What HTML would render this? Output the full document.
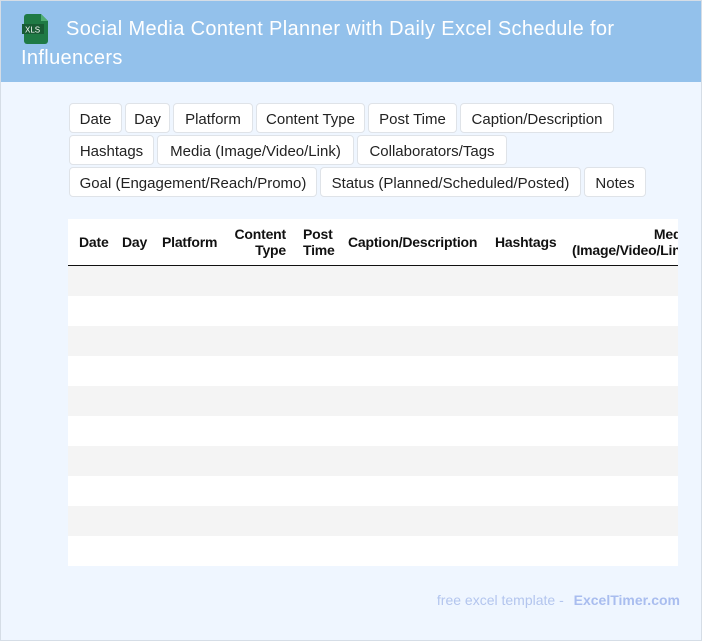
<!DOCTYPE html>
<html><head><meta charset="utf-8"><style>
*{margin:0;padding:0;box-sizing:border-box}
body{width:702px;height:641px;overflow:hidden;background:#eff6ff;font-family:"Liberation Sans",Arial,sans-serif;position:relative}
.frame{position:absolute;left:0;top:0;width:702px;height:641px;border:1px solid #d5dde6;}
.hdr{position:absolute;left:1px;top:1px;width:700px;height:81px;background:#93c1eb}
.title{position:absolute;left:21px;top:15px;width:660px;color:#fff;font-size:20px;letter-spacing:0.35px;line-height:29px;text-indent:45px}
.icon{position:absolute;left:22px;top:14px}
.tag{position:absolute;height:30px;background:#fff;border:1px solid #dfe3e8;border-radius:4px;font-size:15px;color:#222;line-height:29px;padding-top:1px;text-align:center}
.tbl{position:absolute;left:68px;top:219px;width:610px;height:347px;background:#fff;overflow:hidden}
.th{position:absolute;top:0;height:46px;font-weight:bold;font-size:14px;color:#111;display:flex;align-items:center;line-height:16px;white-space:nowrap;letter-spacing:-0.2px}
.line{position:absolute;left:0;top:46px;width:610px;height:2px;background:#111}
.row{position:absolute;left:0;width:610px;height:30px}
.foot{position:absolute;right:22px;top:592px;font-size:14px;color:#b3c5ee}
.foot b{color:#a9bdef;margin-left:6px}
</style></head><body>
<div class="frame"></div>
<div class="hdr"></div>
<svg class="icon" width="28" height="30" viewBox="0 0 28 30"><path d="M5 0h14l7 7v20a3 3 0 0 1-3 3H5a3 3 0 0 1-3-3V3a3 3 0 0 1 3-3z" fill="#1f7a45"/><path d="M19 0v7h7z" fill="#4fae72"/><rect x="0" y="10" width="22" height="10" fill="#185c34"/><text x="3" y="18.5" font-size="8" fill="#fff" font-family="Liberation Sans">XLS</text></svg>
<div class="title">Social Media Content Planner with Daily Excel Schedule for Influencers</div>

<div class="tag" style="left:69px;top:103px;width:53px">Date</div>
<div class="tag" style="left:125px;top:103px;width:45px">Day</div>
<div class="tag" style="left:173px;top:103px;width:80px">Platform</div>
<div class="tag" style="left:256px;top:103px;width:109px">Content Type</div>
<div class="tag" style="left:368px;top:103px;width:89px">Post Time</div>
<div class="tag" style="left:460px;top:103px;width:154px">Caption/Description</div>
<div class="tag" style="left:69px;top:135px;width:85px">Hashtags</div>
<div class="tag" style="left:157px;top:135px;width:197px">Media (Image/Video/Link)</div>
<div class="tag" style="left:357px;top:135px;width:150px">Collaborators/Tags</div>
<div class="tag" style="left:69px;top:167px;width:248px">Goal (Engagement/Reach/Promo)</div>
<div class="tag" style="left:320px;top:167px;width:261px">Status (Planned/Scheduled/Posted)</div>
<div class="tag" style="left:584px;top:167px;width:62px">Notes</div>

<div class="tbl">
<div class="th" style="left:11px">Date</div>
<div class="th" style="left:54px">Day</div>
<div class="th" style="left:94px">Platform</div>
<div class="th" style="left:160px;width:58px;text-align:right;justify-content:flex-end">Content<br>Type</div>
<div class="th" style="left:235px">Post<br>Time</div>
<div class="th" style="left:280px">Caption/Description</div>
<div class="th" style="left:427px">Hashtags</div>
<div class="th" style="left:504px;text-align:right">&nbsp;&nbsp;&nbsp;&nbsp;&nbsp;&nbsp;&nbsp;&nbsp;&nbsp;&nbsp;&nbsp;&nbsp;&nbsp;&nbsp;&nbsp;&nbsp;&nbsp;&nbsp;&nbsp;&nbsp;Media<br>(Image/Video/Link)</div>
<div class="line"></div>
<div class="row" style="top:47px;background:#f4f4f4"></div>
<div class="row" style="top:107px;background:#f4f4f4"></div>
<div class="row" style="top:167px;background:#f4f4f4"></div>
<div class="row" style="top:227px;background:#f4f4f4"></div>
<div class="row" style="top:287px;background:#f4f4f4"></div>
</div>
<div class="foot">free excel template - <b>ExcelTimer.com</b></div>
</body></html>
